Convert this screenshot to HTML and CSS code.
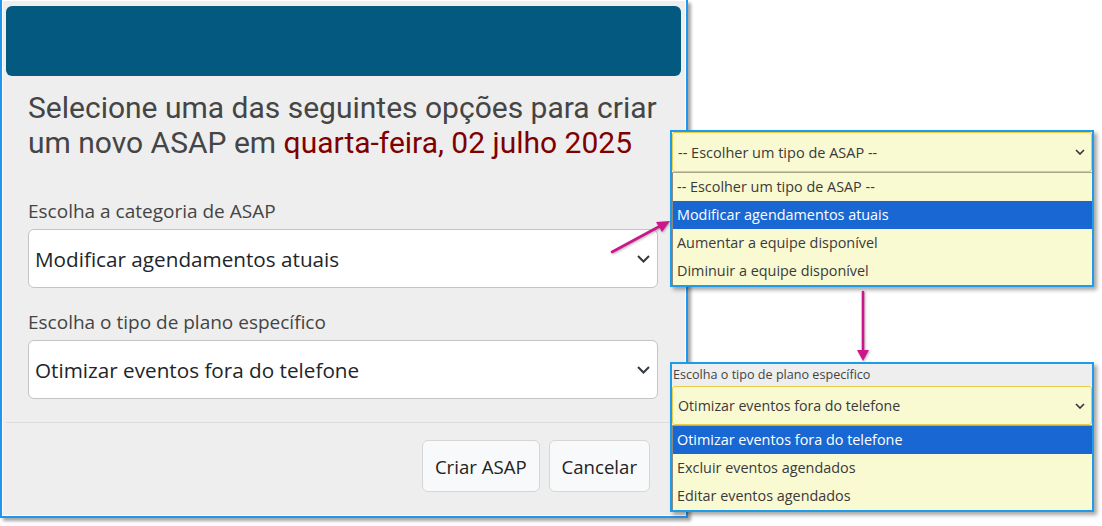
FILE: index.html
```html
<!DOCTYPE html>
<html lang="pt">
<head>
<meta charset="utf-8">
<title>Criar ASAP</title>
<link rel="stylesheet" href="styles.css">
</head>
<body>
<div class="canvas">
  <div class="modal">
    <div class="modal-content">
      <div class="modal-header"></div>
      <div class="modal-body">
        <h2 class="title"><span class="lead">Selecione uma das seguintes opções para criar</span> <span class="lead">um novo ASAP em</span> <span class="date">quarta-feira, 02 julho 2025</span></h2>
        <div class="field">
          <label class="label">Escolha a categoria de ASAP</label>
          <div class="select"><span>Modificar agendamentos atuais</span><svg class="chev" width="13" height="8" viewBox="0 0 13 8"><path d="M1 1l5.5 5.5L12 1" fill="none" stroke="#343a40" stroke-width="2"/></svg></div>
        </div>
        <div class="field">
          <label class="label">Escolha o tipo de plano específico</label>
          <div class="select"><span>Otimizar eventos fora do telefone</span><svg class="chev" width="13" height="8" viewBox="0 0 13 8"><path d="M1 1l5.5 5.5L12 1" fill="none" stroke="#343a40" stroke-width="2"/></svg></div>
        </div>
      </div>
      <div class="modal-footer">
        <button class="btn">Criar ASAP</button>
        <button class="btn">Cancelar</button>
      </div>
    </div>
  </div>

  <div class="callout callout-1">
    <div class="cselect"><span>-- Escolher um tipo de ASAP --</span><svg class="cchev" width="10" height="6" viewBox="0 0 10 6"><path d="M1 1l4 4 4-4" fill="none" stroke="#333" stroke-width="1.6"/></svg></div>
    <ul class="clist">
      <li>-- Escolher um tipo de ASAP --</li>
      <li class="sel">Modificar agendamentos atuais</li>
      <li>Aumentar a equipe disponível</li>
      <li>Diminuir a equipe disponível</li>
    </ul>
  </div>

  <div class="callout callout-2">
    <div class="clabel">Escolha o tipo de plano específico</div>
    <div class="cselect"><span>Otimizar eventos fora do telefone</span><svg class="cchev" width="10" height="6" viewBox="0 0 10 6"><path d="M1 1l4 4 4-4" fill="none" stroke="#333" stroke-width="1.6"/></svg></div>
    <ul class="clist">
      <li class="sel">Otimizar eventos fora do telefone</li>
      <li>Excluir eventos agendados</li>
      <li>Editar eventos agendados</li>
    </ul>
  </div>

  <svg class="arrows" width="1102" height="526" viewBox="0 0 1102 526">
    <g fill="#cc168a" stroke="#cc168a">
      <line x1="612" y1="252" x2="662" y2="225" stroke-width="2.6" stroke-linecap="round"/>
      <polygon points="670,221 656,222 662,232" stroke="none"/>
      <line x1="863" y1="292" x2="863" y2="352" stroke-width="2.6" stroke-linecap="round"/>
      <polygon points="863,361 857,350 869,350" stroke="none"/>
    </g>
  </svg>
</div>
</body>
</html>
```
FILE: styles.css
```css
html, body {
  margin: 0;
  padding: 0;
  background: #ffffff;
}
.canvas {
  position: relative;
  width: 1102px;
  height: 526px;
  overflow: hidden;
  background: #ffffff;
}
.modal {
  box-sizing: border-box;
  width: 688px;
  height: 518px;
  border: 2px solid #2196ee;
  border-top: 0;
  padding: 1px;
  background: #ffffff;
  box-shadow: 3px 3px 3px rgba(0, 0, 0, 0.35);
}
.modal-content {
  box-sizing: border-box;
  height: 100%;
  background: #eeeeee;
  padding: 5px 4px 0 3px;
}
.modal-header {
  height: 70px;
  background: #03597f;
  border-radius: 6px;
}
.modal-body {
  padding: 14px 23px 23px 22px;
}
.title {
  margin: 0 -20px 39px 0;
  font-family: Roboto, "Liberation Sans", sans-serif;
  font-weight: 400;
  font-size: 30px;
  line-height: 35px;
  color: #454545;
}
.date {
  color: #800000;
}
.field + .field {
  margin-top: 22px;
}
.label {
  display: block;
  font-family: "Open Sans", "Noto Sans", sans-serif;
  font-size: 19px;
  line-height: 24px;
  color: #444444;
  margin-bottom: 6px;
}
.select {
  box-sizing: border-box;
  height: 59px;
  display: flex;
  align-items: center;
  justify-content: space-between;
  padding: 0 7px 0 6px;
  background: #ffffff;
  border: 1px solid #c4c4c4;
  border-radius: 6px;
  font-family: "Open Sans", "Noto Sans", sans-serif;
  font-size: 20.7px;
  color: #212529;
}
.modal-footer {
  border-top: 1px solid #dcdcdc;
  padding: 17px 31px 0 0;
  display: flex;
  justify-content: flex-end;
  gap: 9px;
}
.btn {
  box-sizing: border-box;
  height: 52px;
  padding: 0 12px;
  background: #f8f9fa;
  border: 1px solid #d6d6d6;
  border-radius: 6px;
  font-family: "Open Sans", "Noto Sans", sans-serif;
  font-size: 18.6px;
  color: #222222;
}

.callout {
  position: absolute;
  left: 670px;
  width: 424px;
  box-sizing: border-box;
  border: 2px solid #1e9be9;
  background: #f9f9d2;
  box-shadow: 3px 3px 4px rgba(0, 0, 0, 0.35);
  font-family: "Open Sans", "Noto Sans", sans-serif;
  font-size: 14.4px;
  color: #3a3a3a;
}
.callout-1 {
  top: 130px;
}
.callout-2 {
  top: 362px;
}
.clabel {
  height: 22px;
  background: #eeeeee;
  font-size: 12.6px;
  line-height: 22px;
  color: #444444;
  padding-left: 1px;
}
.cselect {
  box-sizing: border-box;
  height: 40px;
  display: flex;
  align-items: center;
  justify-content: space-between;
  padding: 0 6px 0 5px;
  border: 1px solid #eccb4b;
  border-radius: 3px;
  background: #f9f9d2;
  font-size: 14.5px;
}
.callout-2 .cselect {
  height: 39px;
  font-size: 14.2px;
}
.clist {
  list-style: none;
  margin: 0;
  padding: 0;
  border-top: 1px solid #a8a890;
  border-left: 1px solid #8a8a80;
}
.clist li {
  height: 28px;
  line-height: 28px;
  padding-left: 4px;
}
.clist li.sel {
  background: #1967d2;
  color: #ffffff;
}
.arrows {
  position: absolute;
  left: 0;
  top: 0;
  pointer-events: none;
  filter: drop-shadow(1px 1px 1px rgba(0, 0, 0, 0.3));
}
```
